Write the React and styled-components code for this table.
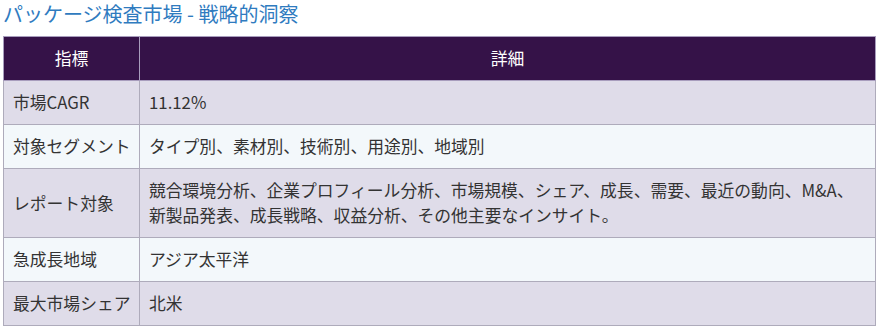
import React from "react";
import styled, { createGlobalStyle } from "styled-components";

const Global = createGlobalStyle`
  html, body { margin: 0; padding: 0; background: #ffffff; }
  body { font-family: "Noto Sans CJK JP", "Noto Sans", sans-serif; }
`;

const Page = styled.div`
  padding: 0 6px 0 3px;
`;

const Title = styled.h2`
  margin: 0;
  height: 36px;
  font-size: 20px;
  line-height: 27px;
  font-weight: 400;
  color: #2f7bbf;
`;

const Table = styled.table`
  width: 100%;
  table-layout: fixed;
  border-collapse: collapse;
  font-size: 16.8px;
  color: #333333;
`;

const Th = styled.th`
  background: #351248;
  color: #ffffff;
  font-weight: 400;
  padding: 9px 10px;
  line-height: 25px;
  border: 1px solid #a89dbd;
  text-align: center;
  width: ${(p) => p.$w || "auto"};
`;

const Tr = styled.tr`
  background: ${(p) => (p.$alt ? "#f3f8fb" : "#dfdce9")};
`;

const Td = styled.td`
  padding: 9px 10px 9px 9px;
  line-height: 25px;
  border: 1px solid #aeabbb;
  vertical-align: middle;
  white-space: ${(p) => (p.$nowrap ? "nowrap" : "normal")};
`;

const rows = [
  ["市場CAGR", "11.12%"],
  ["対象セグメント", "タイプ別、素材別、技術別、用途別、地域別"],
  [
    "レポート対象",
    "競合環境分析、企業プロフィール分析、市場規模、シェア、成長、需要、最近の動向、M&A、新製品発表、成長戦略、収益分析、その他主要なインサイト。",
  ],
  ["急成長地域", "アジア太平洋"],
  ["最大市場シェア", "北米"],
];

export default function App() {
  return (
    <>
      <Global />
      <Page>
        <Title>パッケージ検査市場 - 戦略的洞察</Title>
        <Table>
          <thead>
            <tr>
              <Th $w="115px">指標</Th>
              <Th>詳細</Th>
            </tr>
          </thead>
          <tbody>
            {rows.map(([k, v], i) => (
              <Tr key={k} $alt={i % 2 === 1}>
                <Td $nowrap>{k}</Td>
                <Td>{v}</Td>
              </Tr>
            ))}
          </tbody>
        </Table>
      </Page>
    </>
  );
}
